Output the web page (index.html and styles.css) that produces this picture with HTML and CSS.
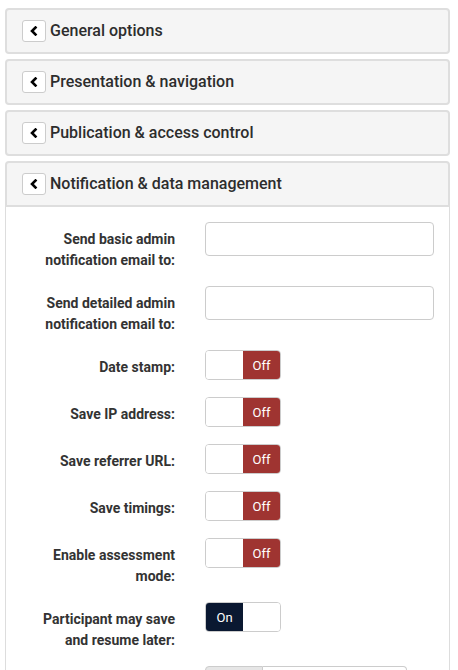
FILE: index.html
```html
<!DOCTYPE html>
<html>
<head>
<meta charset="utf-8">
<link rel="stylesheet" href="styles.css">
</head>
<body>
<div class="panel">
  <div class="panel-heading">
    <span class="chev"><svg width="10" height="10" viewBox="0 0 10 10"><polyline points="6.5,1.5 3,5 6.5,8.5" fill="none" stroke="#000" stroke-width="2.6" stroke-linecap="square"/></svg></span>
    <span class="title">General options</span>
  </div>
</div>
<div class="panel">
  <div class="panel-heading">
    <span class="chev"><svg width="10" height="10" viewBox="0 0 10 10"><polyline points="6.5,1.5 3,5 6.5,8.5" fill="none" stroke="#000" stroke-width="2.6" stroke-linecap="square"/></svg></span>
    <span class="title">Presentation &amp; navigation</span>
  </div>
</div>
<div class="panel">
  <div class="panel-heading">
    <span class="chev"><svg width="10" height="10" viewBox="0 0 10 10"><polyline points="6.5,1.5 3,5 6.5,8.5" fill="none" stroke="#000" stroke-width="2.6" stroke-linecap="square"/></svg></span>
    <span class="title">Publication &amp; access control</span>
  </div>
</div>
<div class="panel open">
  <div class="panel-heading">
    <span class="chev"><svg width="10" height="10" viewBox="0 0 10 10"><polyline points="6.5,1.5 3,5 6.5,8.5" fill="none" stroke="#000" stroke-width="2.6" stroke-linecap="square"/></svg></span>
    <span class="title">Notification &amp; data management</span>
  </div>
  <div class="panel-body">
    <div class="form-row">
      <label class="lbl">Send basic admin notification email to:</label>
      <div class="ctrl"><input class="text-input" type="text"></div>
    </div>
    <div class="form-row">
      <label class="lbl">Send detailed admin notification email to:</label>
      <div class="ctrl"><input class="text-input" type="text"></div>
    </div>
    <div class="form-row">
      <label class="lbl">Date stamp:</label>
      <div class="ctrl"><div class="toggle"><span class="blank"></span><span class="off">Off</span></div></div>
    </div>
    <div class="form-row">
      <label class="lbl">Save IP address:</label>
      <div class="ctrl"><div class="toggle"><span class="blank"></span><span class="off">Off</span></div></div>
    </div>
    <div class="form-row">
      <label class="lbl">Save referrer URL:</label>
      <div class="ctrl"><div class="toggle"><span class="blank"></span><span class="off">Off</span></div></div>
    </div>
    <div class="form-row">
      <label class="lbl">Save timings:</label>
      <div class="ctrl"><div class="toggle"><span class="blank"></span><span class="off">Off</span></div></div>
    </div>
    <div class="form-row">
      <label class="lbl">Enable assessment mode:</label>
      <div class="ctrl"><div class="toggle"><span class="blank"></span><span class="off">Off</span></div></div>
    </div>
    <div class="form-row">
      <label class="lbl">Participant may save and resume later:</label>
      <div class="ctrl"><div class="toggle"><span class="on">On</span><span class="blank"></span></div></div>
    </div>
    <div class="form-row">
      <label class="lbl"></label>
      <div class="ctrl"><div class="input-group"><span class="addon"></span><span class="field"></span></div></div>
    </div>
  </div>
</div>
</body>
</html>
```
FILE: styles.css
```css
html, body {
  overflow: hidden;
}
body {
  margin: 8px 8px 0 5px;
  font-family: Roboto, "Liberation Sans", sans-serif;
  color: #333;
  background: #fff;
}
.panel {
  margin-bottom: 5px;
}
.panel-heading {
  height: 42px;
  background: #f5f5f5;
  border: 2px solid #dedede;
  border-radius: 4px;
  display: flex;
  align-items: center;
  padding-left: 15px;
  padding-bottom: 1px;
  box-sizing: content-box;
  gap: 4px;
}
.panel-heading {
  height: 41px;
}
.panel.open .panel-heading {
  border-radius: 4px 4px 0 0;
}
.chev {
  width: 22px;
  height: 20px;
  background: #fff;
  border: 1px solid #ccc;
  border-radius: 3px;
  display: flex;
  align-items: center;
  justify-content: center;
}
.chev svg {
  display: block;
}
.title {
  font-size: 16px;
  font-weight: 500;
  color: #2d2d2d;
}
.panel-body {
  border-left: 1px solid #ddd;
  border-right: 1px solid #ddd;
  padding-top: 15px;
}
.form-row {
  display: grid;
  grid-template-columns: 184px 1fr;
  margin-bottom: 15px;
}
.lbl {
  text-align: right;
  padding: 7px 15px 0 22px;
  font-size: 14px;
  font-weight: 700;
  line-height: 21px;
}
.ctrl {
  padding: 0 15px;
  min-height: 32px;
}
.text-input {
  box-sizing: border-box;
  display: block;
  width: 100%;
  height: 34px;
  border: 1px solid #ccc;
  border-radius: 4px;
  margin: 0;
}
.toggle {
  box-sizing: border-box;
  width: 76px;
  height: 30px;
  border: 1px solid #ccc;
  border-radius: 4px;
  overflow: hidden;
  display: flex;
  font-size: 13px;
  color: #fff;
}
.toggle span {
  flex: 1;
  display: flex;
  align-items: center;
  justify-content: center;
}
.blank {
  background: #fff;
}
.off {
  background: #9f3431;
}
.on {
  background: #0a1831;
}
.input-group {
  display: flex;
  height: 34px;
  width: 202px;
}
.addon {
  box-sizing: border-box;
  width: 58px;
  background: #e6e6e6;
  border: 1px solid #ccc;
  border-radius: 4px 0 0 4px;
}
.field {
  flex: 1;
  border: 1px solid #ccc;
  border-left: none;
  border-radius: 0 4px 4px 0;
}
```
